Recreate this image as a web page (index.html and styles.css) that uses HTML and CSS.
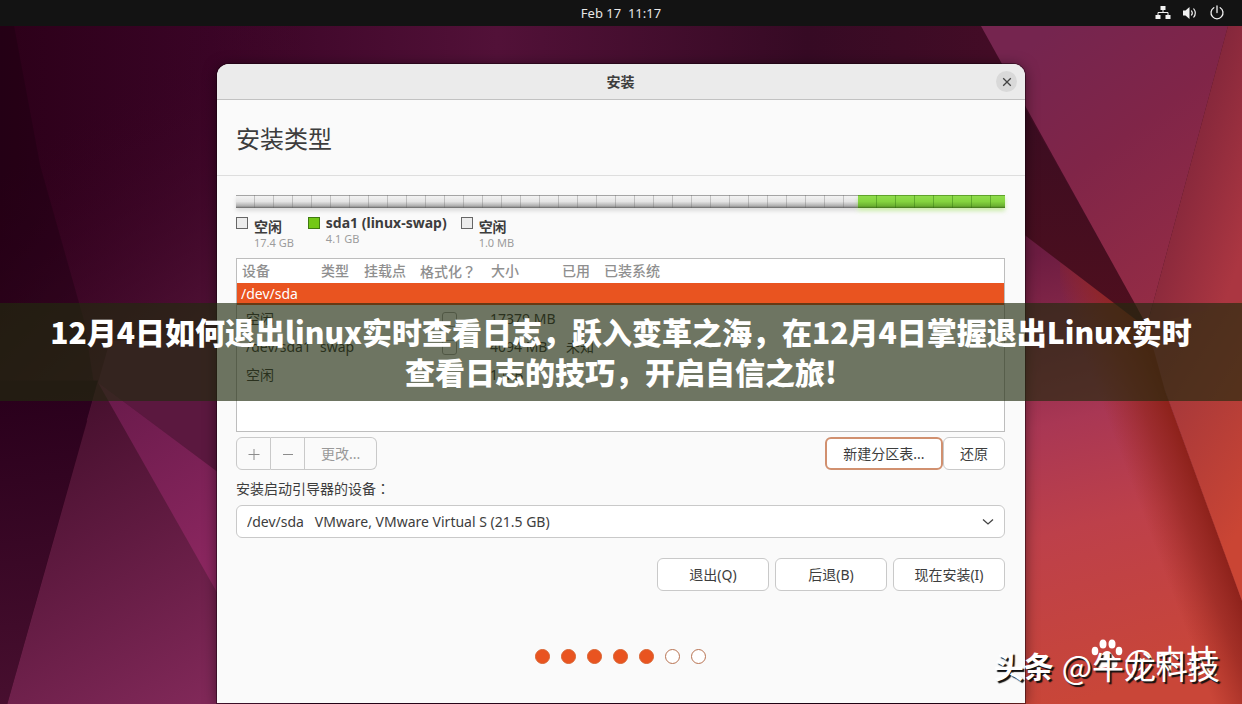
FILE: index.html
```html
<!DOCTYPE html>
<html lang="zh-CN">
<head>
<meta charset="utf-8">
<meta name="viewport" content="width=device-width, initial-scale=1">
<title>安装</title>
<link rel="stylesheet" href="styles.css">
</head>
<body>
<svg class="wallpaper" viewBox="0 0 1242 704" preserveAspectRatio="none" aria-hidden="true">
  <defs>
    <linearGradient id="base" x1="0" y1="0" x2="1" y2="0"><stop offset="0" stop-color="#2c0019"/><stop offset=".17" stop-color="#3a0426"/><stop offset=".4" stop-color="#521138"/><stop offset=".65" stop-color="#360a24"/><stop offset=".8" stop-color="#430c26"/><stop offset="1" stop-color="#4a0f20"/></linearGradient>
    <linearGradient id="leftGlow" gradientUnits="userSpaceOnUse" x1="70" y1="120" x2="240" y2="340"><stop offset="0" stop-color="#36011f" stop-opacity="0"/><stop offset="1" stop-color="#56153a"/></linearGradient>
    <linearGradient id="leftLow" gradientUnits="userSpaceOnUse" x1="0" y1="400" x2="40" y2="704"><stop offset="0" stop-color="#2a001c"/><stop offset="1" stop-color="#480f2f"/></linearGradient>
    <linearGradient id="mid" gradientUnits="userSpaceOnUse" x1="60" y1="420" x2="217" y2="690"><stop offset="0" stop-color="#48102f"/><stop offset="1" stop-color="#802858"/></linearGradient>
    <linearGradient id="wedge" gradientUnits="userSpaceOnUse" x1="110" y1="400" x2="217" y2="570"><stop offset="0" stop-color="#6b1b4c"/><stop offset="1" stop-color="#8c2760"/></linearGradient>
    <linearGradient id="tri" gradientUnits="userSpaceOnUse" x1="1010" y1="60" x2="1180" y2="290"><stop offset="0" stop-color="#75254f"/><stop offset=".45" stop-color="#802548"/><stop offset="1" stop-color="#942c45"/></linearGradient>
    <linearGradient id="edge" gradientUnits="userSpaceOnUse" x1="1172" y1="170" x2="1260" y2="200"><stop offset="0" stop-color="#82263b"/><stop offset="1" stop-color="#ab3641"/></linearGradient>
    <linearGradient id="darkWedge" x1="0" y1="0" x2="0" y2="1"><stop offset="0" stop-color="#360c22"/><stop offset="1" stop-color="#500f1e"/></linearGradient>
    <linearGradient id="low" gradientUnits="userSpaceOnUse" x1="1010" y1="260" x2="1120" y2="690"><stop offset="0" stop-color="#6c1c41"/><stop offset=".38" stop-color="#a93754"/><stop offset=".62" stop-color="#bd404a"/><stop offset="1" stop-color="#c94638"/></linearGradient>
    <linearGradient id="fold" gradientUnits="userSpaceOnUse" x1="1145" y1="520" x2="1204" y2="498"><stop offset="0" stop-color="#a02a20" stop-opacity="0"/><stop offset=".6" stop-color="#94261f" stop-opacity=".7"/><stop offset="1" stop-color="#8e221b"/></linearGradient>
    <linearGradient id="right" x1="0" y1="0" x2=".5" y2="1"><stop offset="0" stop-color="#93313e"/><stop offset="1" stop-color="#ca4534"/></linearGradient>
  </defs>
  <path fill="url(#base)" d="M0 0H1242V704H0z"/>
  <path fill="url(#leftGlow)" d="M0 26H300V420H0z"/>
  <path fill="#18000f" fill-opacity=".35" d="M0 26H14L40 165L84 320L95 390L0 420z"/>
  <path fill="url(#leftLow)" d="M0 380H98L7 704H0z"/>
  <path fill="url(#mid)" d="M98 382L7 704H300V520z"/>
  <path fill="#5b183f" d="M98 382L240 488V340H110z"/>
  <path fill="url(#wedge)" d="M98 382L240 488V632z"/>
  <path fill="url(#low)" d="M1000 216L1150 317L1165 390L1242 600V704H1000z"/>
  <path fill="url(#fold)" d="M1060 256L1150 317L1165 390L1242 600V704H1060z"/>
  <path fill="url(#darkWedge)" d="M1000 64L1150 330L1000 216z"/>
  <path fill="url(#tri)" d="M981 26H1228L1147 325z"/>
  <path fill="url(#edge)" d="M1228 26H1242V600L1147 325z"/>
  <path fill="url(#right)" d="M1147 325L1242 300V600L1165 390z"/>
</svg>

<header class="topbar">
  <time class="clock">Feb 17&nbsp; 11:17</time>
  <div class="tray">
    <svg width="16" height="16" viewBox="0 0 16 16" role="img" aria-label="网络"><path fill="#f2f2f2" d="M5.5 1h5v4h-5zM.5 10h5v4h-5zM10.5 10h5v4h-5z"/><path fill="none" stroke="#f2f2f2" d="M8 5v2.500M3 10V7.500h10V10"/></svg>
    <svg width="16" height="16" viewBox="0 0 16 16" role="img" aria-label="音量"><path fill="#f2f2f2" d="M1 5.500h2.500L7.500 2v12l-4-3.500H1z"/><path fill="none" stroke="#f2f2f2" stroke-width="1.200" d="M9.300 5.500q2 2.500 0 5M11.500 3.500q3.600 4.500 0 9"/></svg>
    <svg width="16" height="16" viewBox="0 0 16 16" role="img" aria-label="电源"><path fill="none" stroke="#f2f2f2" stroke-width="1.300" stroke-linecap="round" d="M8 1v6.500M4.800 2.700a6 6 0 1 0 6.400 0"/></svg>
  </div>
</header>

<main class="desktop">
  <section class="window" aria-label="安装">
    <div class="titlebar">
      <span class="title">安装</span>
      <button class="close" aria-label="关闭"><svg width="10" height="10" viewBox="0 0 10 10"><path fill="none" stroke="#444" stroke-width="1.300" d="M1.200 1.200l7.600 7.600M8.800 1.200L1.200 8.800"/></svg></button>
    </div>
    <h1 class="heading">安装类型</h1>
    <div class="content">
      <div class="disk"><div class="disk-free"></div><div class="disk-swap"></div></div>
      <ul class="legend">
        <li><i class="swatch"></i><span class="han"><b>空闲</b><small>17.4 GB</small></span></li>
        <li><i class="swatch green"></i><span><b>sda1 (linux-swap)</b><small>4.1 GB</small></span></li>
        <li><i class="swatch"></i><span class="han"><b>空闲</b><small>1.0 MB</small></span></li>
      </ul>
      <div class="partitions">
        <table>
          <colgroup><col class="c-device"><col class="c-type"><col class="c-mount"><col class="c-format"><col class="c-size"><col class="c-used"><col></colgroup>
          <thead><tr><th>设备</th><th>类型</th><th>挂载点</th><th>格式化<span class="mark" lang="zh-TW">？</span></th><th>大小</th><th>已用</th><th>已装系统</th></tr></thead>
          <tbody>
            <tr class="selected"><td colspan="7">/dev/sda</td></tr>
            <tr><td>空闲</td><td></td><td></td><td class="check"><input type="checkbox" aria-label="格式化空闲"></td><td>17379 MB</td><td></td><td></td></tr>
            <tr><td>/dev/sda1</td><td class="swap">swap</td><td></td><td class="check"><input type="checkbox" aria-label="格式化 sda1"></td><td>4094 MB</td><td>未知</td><td></td></tr>
            <tr><td>空闲</td><td></td><td></td><td></td><td>1 MB</td><td></td><td></td></tr>
          </tbody>
        </table>
      </div>
      <div class="toolbar">
        <div class="group">
          <button class="btn sign" disabled aria-label="添加"><svg width="12" height="12" viewBox="0 0 12 12"><path stroke="#8c8c8c" d="M.500 6.500h11M6 1v11"/></svg></button>
          <button class="btn sign" disabled aria-label="删除"><svg width="12" height="12" viewBox="0 0 12 12"><path stroke="#8c8c8c" d="M1 6.500h10"/></svg></button>
          <button class="btn change" disabled>更改...</button>
        </div>
        <div class="actions">
          <button class="btn focus">新建分区表...</button>
          <button class="btn revert">还原</button>
        </div>
      </div>
      <label class="boot-label" for="boot">安装启动引导器的设备<span class="mark" lang="zh-TW">：</span></label>
      <div class="select-box">
        <select id="boot"><option>/dev/sda &nbsp; VMware, VMware Virtual S (21.5 GB)</option></select>
        <svg class="chevron" width="12" height="8" viewBox="0 0 12 8" aria-hidden="true"><path fill="none" stroke="#444" stroke-width="1.300" d="M1 1.500l5 4.500l5-4.500"/></svg>
      </div>
      <div class="nav">
        <button class="btn">退出(Q)</button>
        <button class="btn">后退(B)</button>
        <button class="btn">现在安装(I)</button>
      </div>
      <div class="dots"><i class="on"></i><i class="on"></i><i class="on"></i><i class="on"></i><i class="on"></i><i></i><i></i></div>
    </div>
  </section>
</main>

<div class="banner">12月4日如何退出linux实时查看日志，跃入变革之海，在12月4日掌握退出Linux实时查看日志的技巧，开启自信之旅!</div>

<div class="watermark back">
  <svg width="34" height="32" viewBox="0 0 34 32" aria-hidden="true"><g fill="#fff"><ellipse cx="13" cy="5" rx="3.500" ry="4.500"/><ellipse cx="22" cy="5" rx="3.500" ry="4.500"/><ellipse cx="5" cy="12" rx="3.300" ry="4.300"/><ellipse cx="29" cy="12" rx="3.300" ry="4.300"/><path d="M17 12c4 0 5 4 8 7c5 5 2 11-3 10c-4-1-6-1-10 0c-5 1-8-5-3-10c3-3 4-7 8-7z"/></g></svg>
  <span>@中技</span>
</div>
<div class="watermark"><b>头条</b><span>@牛龙科技</span></div>
</body>
</html>
```

FILE: styles.css
```css
* { box-sizing: border-box; }

body {
  margin: 0;
  min-height: 100vh;
  display: flex;
  flex-direction: column;
  position: relative;
  overflow-x: hidden;
  background: #3a0525;
  color: #3d3d3d;
  font: 14px/20px "Noto Sans", "Noto Sans CJK SC", sans-serif;
}

button, select { font: inherit; color: inherit; }

.wallpaper {
  position: absolute;
  inset: 0;
  width: 100%;
  height: 100%;
  z-index: -1;
}

.topbar {
  display: grid;
  grid-template-columns: 1fr auto 1fr;
  align-items: center;
  height: 26px;
  padding: 0 17px;
  background: #131313;
  color: #e6e6e6;
  font-size: 13px;
}
.clock { grid-column: 2; }
.tray { display: flex; gap: 11px; justify-content: flex-end; }

.desktop {
  flex: 1;
  display: flex;
  justify-content: center;
  align-items: flex-start;
  padding: 38px 16px 2px;
}

.window {
  width: 808px;
  max-width: 100%;
  background: #fafafa;
  border-radius: 12px 12px 0 0;
  box-shadow: 0 0 0 1px rgba(20, 0, 12, .45), 0 2px 14px rgba(0, 0, 0, .5);
}

.titlebar {
  display: grid;
  grid-template-columns: 1fr auto 1fr;
  align-items: center;
  height: 36px;
  padding: 0 8px 0 7px;
  border-bottom: 1px solid #c2c2c2;
  border-radius: 12px 12px 0 0;
  background: #ebebeb;
}
.title { grid-column: 2; font-weight: 700; }
.close {
  justify-self: end;
  display: grid;
  place-items: center;
  width: 21px;
  height: 21px;
  padding: 0;
  border: 0;
  border-radius: 50%;
  background: #d9d9d9;
}

.heading {
  margin: 0;
  padding: 21px 19px 18px;
  border-bottom: 1px solid #dedede;
  font-size: 24px;
  line-height: 36px;
  font-weight: 400;
}

.content { padding: 19px 20px 39px 19px; }

.disk {
  display: flex;
  height: 13px;
}
.disk-free, .disk-swap {
  background-image:
    repeating-linear-gradient(90deg, transparent 0 18px, rgba(90, 90, 90, .3) 18px 19px),
    linear-gradient(#a5a5a5 0 1px, #f3f3f3 1px, #e4e4e4 50%, #a8a8a8 88%, #777 90%);
  flex: 623;
  box-shadow: 0 3px 4px rgba(0, 0, 0, .12);
}
.disk-swap {
  flex: 147;
  background-image:
    repeating-linear-gradient(90deg, transparent 0 18px, rgba(40, 110, 10, .4) 18px 19px),
    linear-gradient(#5fa32b 0 1px, #8fdc4c 1px, #84d43f 50%, #69ad30 88%, #4a7f20 90%);
  box-shadow: 0 3px 4px rgba(115, 210, 22, .35);
}

.legend {
  display: flex;
  gap: 14px;
  height: 50px;
  margin: 0;
  padding: 6px 0 0;
  list-style: none;
}
.legend li { display: flex; gap: 6px; }
.legend span { display: grid; align-content: start; }
.legend b { line-height: 18px; }
.legend small { font-size: 11px; line-height: 14px; color: #9c9c9c; }
.legend .han { padding-top: 4px; }
.swatch {
  width: 12px;
  height: 12px;
  margin-top: 3px;
  border: 1px solid #666;
  background: #ececec;
}
.swatch.green { background: #73c816; border-color: #3f7a10; }

.partitions {
  min-height: 174px;
  border: 1px solid #bdbdbd;
  background: #fff;
}
table {
  width: 100%;
  border-collapse: collapse;
  table-layout: fixed;
}
.c-device { width: 79px; }
.c-type { width: 43px; }
.c-mount { width: 56px; }
.c-format { width: 71px; }
.c-size { width: 71px; }
.c-used { width: 42px; }
th, td { padding: 0 0 0 5px; text-align: left; white-space: nowrap; }
th { height: 24px; font-weight: 500; color: #8f8f8f; }
td { height: 28px; padding-left: 9px; }
td:nth-child(5) { padding-left: 4px; }
td.swap { padding-left: 4px; }
.selected td { height: 22px; padding-left: 4px; background: #e95420; color: #fff; }
.mark { font-family: "Noto Sans CJK TC", sans-serif; }
.check input {
  display: block;
  appearance: none;
  width: 15px;
  height: 15px;
  margin: 0 0 0 18px;
  border: 1px solid #aaa;
  border-radius: 3px;
}

.toolbar {
  display: flex;
  justify-content: space-between;
  margin-top: 5px;
}
.group, .actions { display: flex; }
.btn {
  height: 33px;
  padding: 0 15px;
  border: 1px solid #c9c9c9;
  border-radius: 6px;
  background: #fff;
}
.actions .focus { width: 118px; padding: 0; border: 2px solid #d1906f; }
.actions .revert { width: 62px; padding: 0; }
.group .btn { background: #fafafa; border-radius: 0; color: #999; }
.group .btn + .btn { border-left: 0; }
.group .sign { width: 34px; padding: 0; display: grid; place-items: center; }
.group .sign:first-child { width: 35px; border-radius: 6px 0 0 6px; }
.group .change { padding: 0 16px; border-radius: 0 6px 6px 0; }

.boot-label { display: block; margin: 8px 0 6px; }
.select-box { position: relative; }
.select-box select {
  display: block;
  appearance: none;
  width: 100%;
  height: 33px;
  padding: 0 32px 0 10px;
  border: 1px solid #c9c9c9;
  border-radius: 6px;
  background: #fff;
}
.chevron { position: absolute; right: 11px; top: 13px; pointer-events: none; }

.nav {
  display: flex;
  justify-content: flex-end;
  gap: 6px;
  margin-top: 20px;
}
.nav .btn { width: 112px; padding: 0; }

.dots {
  display: flex;
  justify-content: center;
  gap: 11px;
  margin-top: 58px;
}
.dots i {
  width: 15px;
  height: 15px;
  border: 1px solid #b87352;
  border-radius: 50%;
  background: #fff;
}
.dots .on { background: #e95420; border-color: #d9622f; }

.banner {
  position: absolute;
  top: 303px;
  left: 0;
  right: 0;
  padding: 8px 46px 10px;
  background: rgba(32, 43, 14, .65);
  color: #fff;
  text-align: center;
  font: 900 30px/40px "Noto Sans CJK SC", sans-serif;
}

.watermark {
  position: absolute;
  right: 22px;
  bottom: 20px;
  display: flex;
  gap: 8px;
  color: #fff;
  font: 32px/40px "Noto Sans CJK SC", sans-serif;
  text-shadow: 2px 2px 1px #111;
}
.watermark b { font-size: 30px; }
.watermark.back { bottom: 26px; right: 24px; gap: 0; text-shadow: none; }
```
